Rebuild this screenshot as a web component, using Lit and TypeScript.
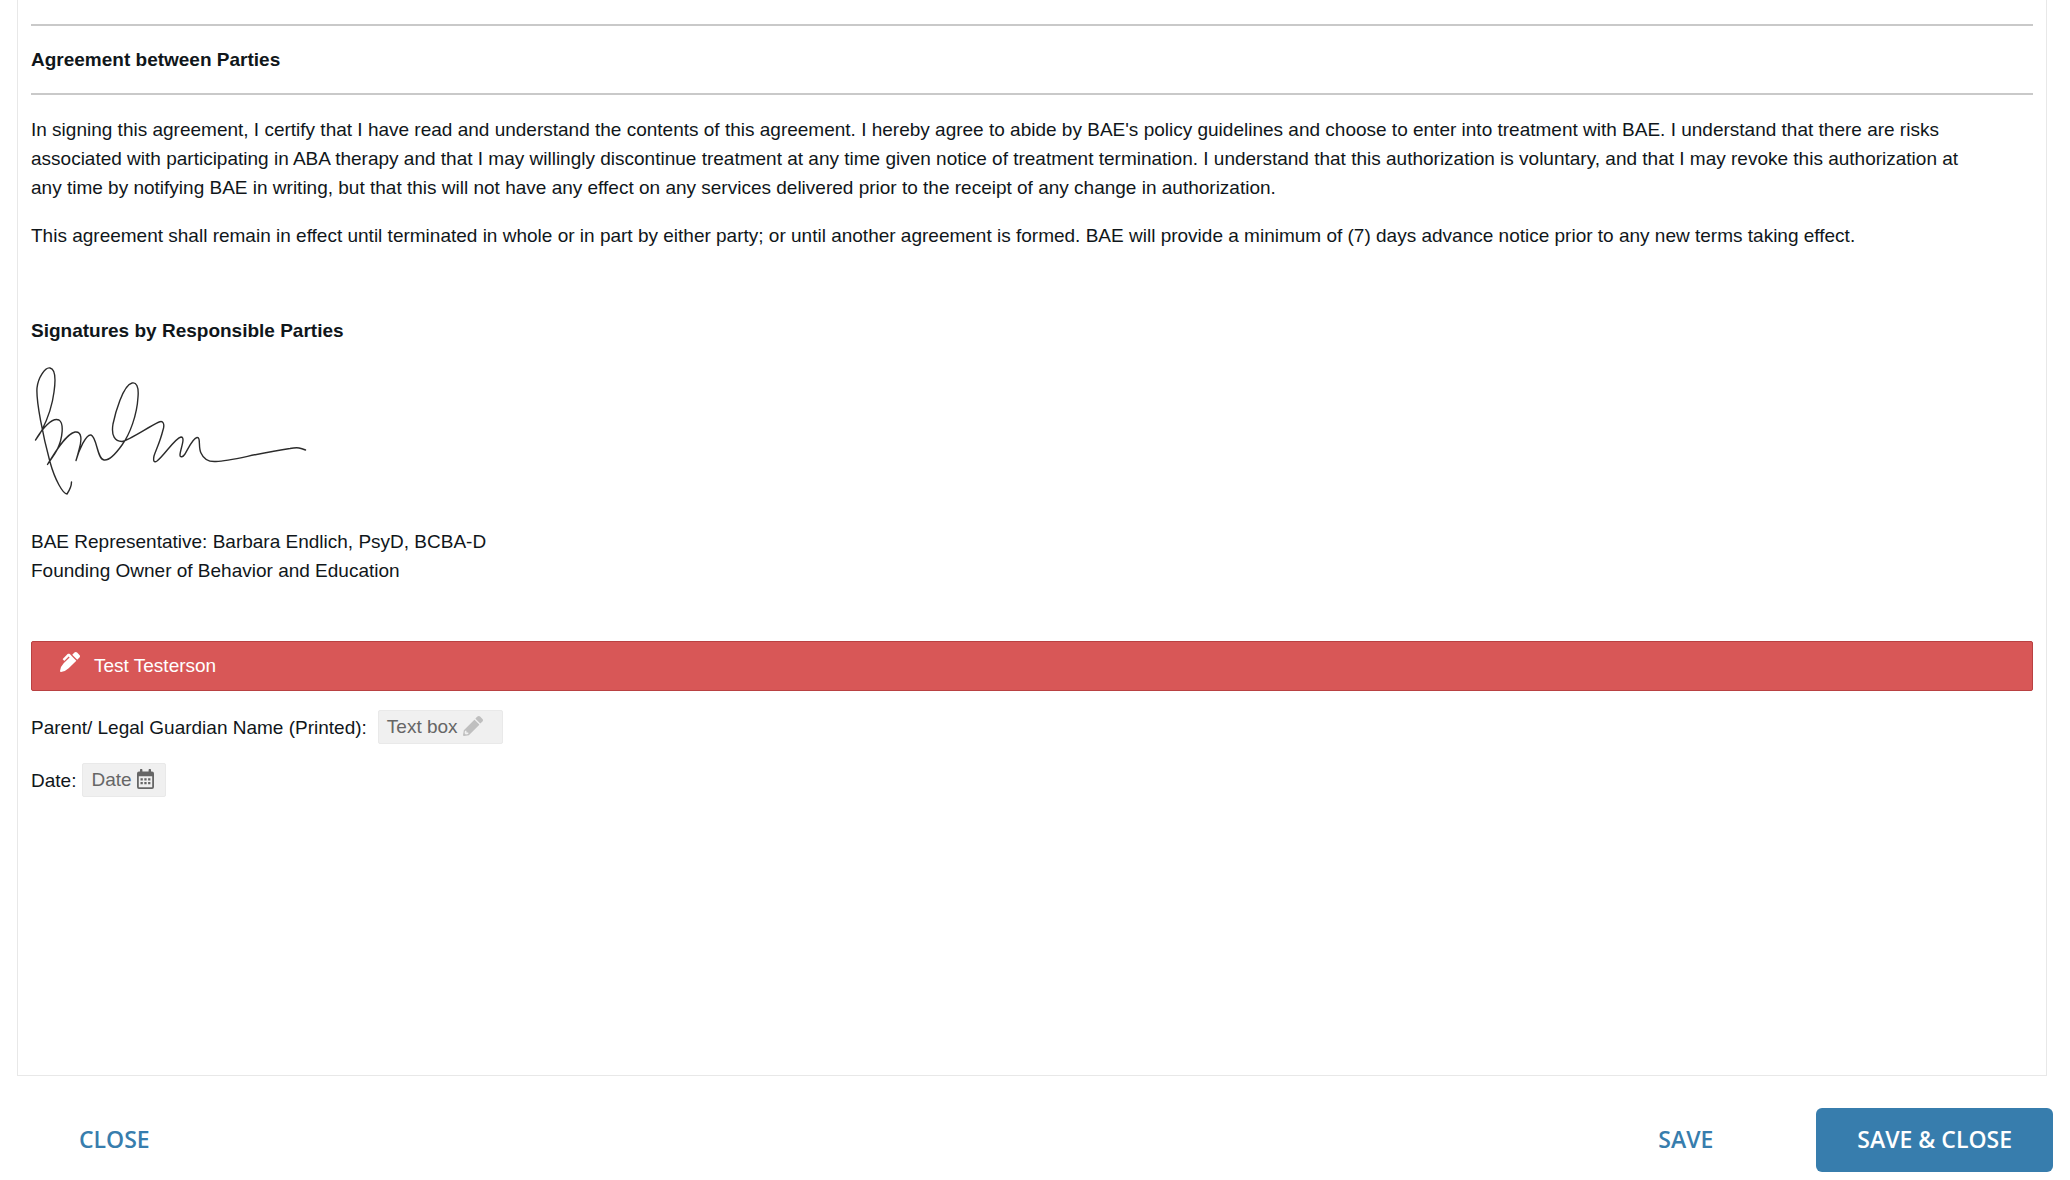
import { LitElement, html, css } from "lit";
import { customElement } from "lit/decorators.js";

@customElement("app-root")
export class AppRoot extends LitElement {
  static styles = css`
    :host {
      display: flex;
      flex-direction: column;
      min-height: 100vh;
      box-sizing: border-box;
      padding: 0 17px 8px;
      background: #fff;
      color: #10161a;
      font: 19px/29px "Liberation Sans", Arial, sans-serif;
    }
    .sheet {
      flex: 1;
      box-sizing: border-box;
      margin: 0 6px 0 0;
      padding: 24px 13px 0;
      border: 1px solid #e8e8e8;
      border-top: 0;
    }
    .title {
      margin: 0;
      padding: 19px 0;
      border: 2px solid #c9c9c9;
      border-width: 2px 0;
      font-size: 19px;
      line-height: 29px;
      font-weight: 700;
    }
    p {
      margin: 20px 0 0;
      padding-right: 40px;
    }
    p + p {
      margin-top: 19px;
    }
    .signatures {
      margin: 66px 0 0;
      font-size: 19px;
      line-height: 29px;
      font-weight: 700;
    }
    .signature {
      display: block;
      width: 280px;
      height: 142px;
      margin-top: 20px;
    }
    .banner {
      display: flex;
      align-items: baseline;
      gap: 14px;
      width: 100%;
      margin: 56px 0 0;
      padding: 9px 28px 10px;
      box-sizing: border-box;
      border: 1px solid #b94142;
      border-radius: 2px;
      background: #d85757;
      color: #fff;
      font: inherit;
      text-align: left;
    }
    .row {
      display: flex;
      align-items: center;
      margin-top: 19px;
    }
    .field {
      display: flex;
      align-items: center;
      gap: 5px;
      box-sizing: border-box;
      height: 34px;
      padding: 0 8px 2px;
      border: 1px solid #e9e9e9;
      border-radius: 2px;
      background: #f0f0f0;
      color: #666;
      font: inherit;
    }
    .name {
      width: 125px;
      margin-left: 11px;
    }
    .date {
      width: 84px;
      margin-left: 6px;
    }
    .icon {
      flex: none;
      display: block;
      width: 20px;
      height: 20px;
    }
    .calendar {
      width: 17px;
    }
    .muted {
      color: #bfbfbf;
    }
    .actions {
      display: flex;
      align-items: center;
      margin-top: 32px;
    }
    .action {
      height: 64px;
      padding: 0 41px 2px;
      border: 0;
      border-radius: 6px;
      background: none;
      color: #377dad;
      font: 600 23px/32px "Open Sans", sans-serif;
    }
    .close {
      margin-right: auto;
      margin-left: 21px;
    }
    .primary {
      margin-left: 62px;
      background: #377dad;
      color: #fff;
    }
  `;

  render() {
    return html`
      <main class="sheet">
        <h2 class="title">Agreement between Parties</h2>
        <p>
          In signing this agreement, I certify that I have read and understand the contents of this
          agreement. I hereby agree to abide by BAE's policy guidelines and choose to enter into
          treatment with BAE. I understand that there are risks associated with participating in ABA
          therapy and that I may willingly discontinue treatment at any time given notice of
          treatment termination. I understand that this authorization is voluntary, and that I may
          revoke this authorization at any time by notifying BAE in writing, but that this will not
          have any effect on any services delivered prior to the receipt of any change in
          authorization.
        </p>
        <p>
          This agreement shall remain in effect until terminated in whole or in part by either party;
          or until another agreement is formed. BAE will provide a minimum of (7) days advance notice
          prior to any new terms taking effect.
        </p>
        <h3 class="signatures">Signatures by Responsible Parties</h3>
        <svg class="signature" viewBox="31 365 280 142" fill="none" stroke="#2b2b2b"
          stroke-width="1.4" stroke-linecap="round" stroke-linejoin="round" role="img"
          aria-label="Signature of Barbara Endlich">
          <path d="M71.5 482C71.500 487 69 491 67 494C63 494 55 480 50 462C43 436 36 401 37 388C38 378 45 367 50 368C55 369 56 378 54 392C52 408 47 420 42 430C40 434 37 438 35.500 440C42 429 52 417 59 420C64 423 63 438 57 450C54 456 50 460 47.500 464.500C55 452 66 434 75 432C82 431 82 440 79 450C78 454 77 457 76 460.500C79 450 86 434 91 435C97 437 97 459 104 460C110 461 117 452 122 445C130 434 137 415 138 397C139 386 136 382 132 383C123 385 115 414 113 424C111 436 115 441 122 441.500C128 441 150 426 159 422C163 420 165 424 163 430C160 442 156 450 154 456C153 461 154 463 157 461C164 456 175 438 181 437C186 437 180 450 180 455C180 458 183 457 185 454C189 447 193 438 197 437.500C201 437 198 447 201 453C204 460 209 462 216 461.500C232 461 255 453.500 290 448.500C298 447 301 448 305.500 450" />
        </svg>
        <p>
          BAE Representative: Barbara Endlich, PsyD, BCBA-D<br />Founding Owner of Behavior and
          Education
        </p>
        <button class="banner" type="button">
          <svg class="icon" viewBox="0 0 512 512" fill="currentColor" aria-hidden="true">
            <path d="M497.94 74.17l-60.11-60.11c-18.75-18.75-49.16-18.75-67.91 0l-56.55 56.55 128.02 128.02 56.55-56.55c18.75-18.75 18.75-49.15 0-67.91zm-246.8-20.53c-15.62-15.62-40.94-15.62-56.56 0L75.8 172.43c-6.25 6.25-6.25 16.38 0 22.62l22.63 22.63c6.25 6.25 16.38 6.25 22.63 0l101.82-101.82 22.63 22.62L93.95 290.03A327.038 327.038 0 0 0 .17 485.11l-.03.23c-1.7 15.28 11.21 28.2 26.49 26.51a327.02 327.02 0 0 0 195.34-93.8l196.79-196.79-82.77-82.77-84.85-84.85z" />
          </svg>
          Test Testerson
        </button>
        <div class="row">
          <label for="guardian">Parent/ Legal Guardian Name (Printed):</label>
          <button id="guardian" class="field name" type="button">
            Text box
            <svg class="icon muted" viewBox="0 0 512 512" fill="currentColor" aria-hidden="true">
              <path d="M497.900 142.100l-46.100 46.100c-4.700 4.700-12.300 4.700-17 0l-111-111c-4.700-4.700-4.700-12.300 0-17l46.100-46.100c18.700-18.700 49.100-18.700 67.900 0l60.100 60.100c18.800 18.700 18.800 49.100 0 67.900zM284.200 99.800L21.600 362.400.4 483.900c-2.900 16.400 11.400 30.600 27.800 27.800l121.500-21.300 262.600-262.600c4.700-4.700 4.700-12.300 0-17l-111-111c-4.800-4.700-12.400-4.700-17.100 0zM88 424h48v36.300l-64.500 11.300-31.100-31.100L51.700 376H88v48z" fill-rule="evenodd" />
            </svg>
          </button>
        </div>
        <div class="row">
          <label for="date">Date:</label>
          <button id="date" class="field date" type="button">
            Date
            <svg class="icon calendar" viewBox="0 0 17 20" fill="currentColor" aria-hidden="true">
              <path fill-rule="evenodd" d="M3 3V1a1 1 0 0 1 2.400 0v1.500h6.200V1a1 1 0 0 1 2.400 0v1.500h1a2 2 0 0 1 2 2V18a2 2 0 0 1-2 2H2a2 2 0 0 1-2-2V4.500a2 2 0 0 1 2-2h1zM1.800 7.300V17.700q0 .5.500.5h12.400q.5 0 .5-.5V7.300z" />
              <path d="M3.500 9.300h2.300v2.300H3.500zM7.300 9.300h2.300v2.300H7.300zM11.100 9.300h2.300v2.300h-2.300zM3.500 12.900h2.300v2.300H3.500zM7.300 12.900h2.300v2.300H7.300zM11.100 12.900h2.300v2.300h-2.300z" />
            </svg>
          </button>
        </div>
      </main>
      <footer class="actions">
        <button class="action close" type="button">CLOSE</button>
        <button class="action" type="button">SAVE</button>
        <button class="action primary" type="button">SAVE &amp; CLOSE</button>
      </footer>
    `;
  }
}
